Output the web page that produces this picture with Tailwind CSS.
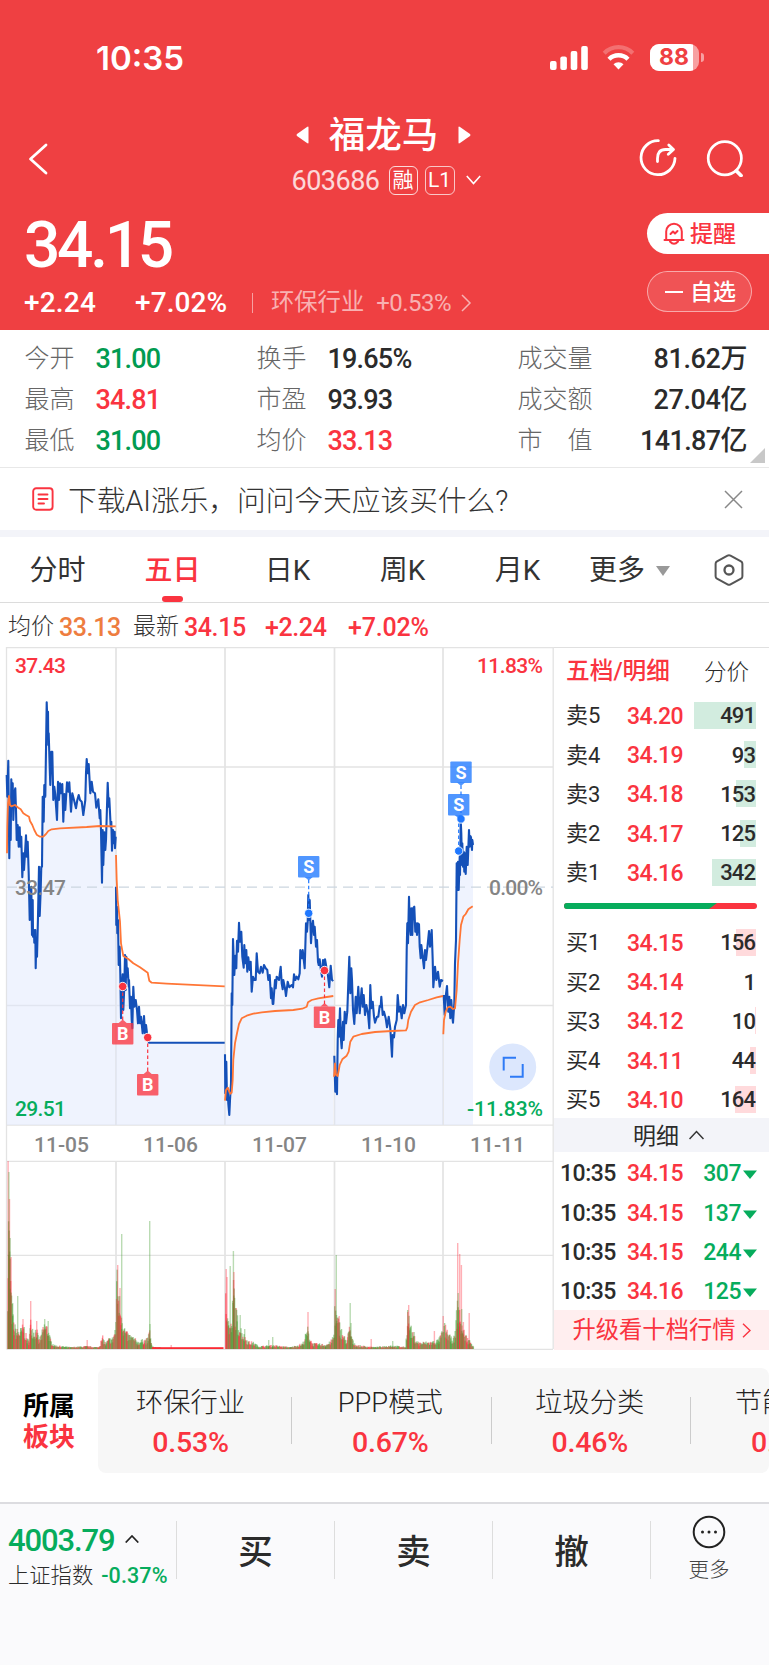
<!DOCTYPE html>
<html lang="zh-CN">
<head>
    <meta charset="UTF-8">
    <meta name="viewport" content="width=device-width, initial-scale=1.0">
    <title>福龙马 603686</title>
    <script src="https://cdn.jsdelivr.net/npm/@tailwindcss/browser@4"></script>
</head>
<body class="w-[769px] h-[1665px] overflow-hidden bg-white text-[#2b2b2b] leading-none whitespace-nowrap font-['Roboto','Noto_Sans_CJK_SC',sans-serif]">

    <!-- Header -->
    <header class="h-[330px] bg-[#ef4042] text-white flex flex-col">
        <div class="h-[115px] flex items-center justify-between pl-[96px] pr-[65px]">
            <span class="font-['Inter'] font-semibold text-[33px] pt-px">10:35</span>
            <div class="flex items-center">
                <svg class="w-[38px] h-[24px]" viewBox="0 0 38 24" fill="currentColor">
                    <rect x="0" y="15" width="6.6" height="9" rx="2"/>
                    <rect x="10.3" y="10.5" width="6.6" height="13.5" rx="2"/>
                    <rect x="20.7" y="5" width="6.6" height="19" rx="2"/>
                    <rect x="31.2" y="0" width="6.6" height="24" rx="2"/>
                </svg>
                <svg class="w-[33px] h-[25px] ml-[14px]" viewBox="0 0 33 25" fill="none" stroke="currentColor">
                    <path d="M2.2 8.2a20 20 0 0 1 28.6 0" stroke-width="4.2" opacity=".25"/>
                    <path d="M7 14.2a13.4 13.4 0 0 1 19 0" stroke-width="4.4"/>
                    <path d="M16.5 24.5l-5-5.2a7 7 0 0 1 10 0z" fill="currentColor" stroke="none"/>
                </svg>
                <div class="ml-[15px] w-[49px] h-[27px] rounded-[9px] overflow-hidden bg-white/50">
                    <div class="w-[43px] h-full bg-white text-[#ef4042] font-['Inter'] font-bold text-[23px] flex items-center justify-center pl-[5px]">88</div>
                </div>
                <div class="ml-[2px] w-[3px] h-[9px] rounded-r-full bg-white/50"></div>
            </div>
        </div>

        <div class="h-[85px] grid grid-cols-[200px_1fr_200px]">
            <div class="pl-[27px] pt-[28px]">
                <svg class="w-[22px] h-[32px]" viewBox="0 0 22 32" fill="none" stroke="currentColor" stroke-width="2.8" stroke-linecap="round" stroke-linejoin="round"><path d="M19 2L3.5 16 19 30"/></svg>
            </div>
            <div class="flex flex-col items-center">
                <div class="flex items-center h-[40px] gap-[20px] pr-[2px]">
                    <svg class="w-[13px] h-[18px]" viewBox="0 0 13 18" fill="currentColor"><path d="M12.5 1.5v15q0 1.5-1.5.5L1 10q-1-1 0-2L11 1q1.5-1 1.5.5z"/></svg>
                    <h1 class="text-[36.5px] font-medium pt-[3px]">福龙马</h1>
                    <svg class="w-[13px] h-[18px]" viewBox="0 0 13 18" fill="currentColor"><path d="M.5 1.5v15q0 1.5 1.5.5l10-7q1-1 0-2L2 1Q.5 0 .5 1.5z"/></svg>
                </div>
                <div class="flex items-center h-[52px] -mt-[1px] pl-[3px]">
                    <span class="text-[27px] tracking-[-0.5px] text-white/80 pt-[3px]">603686</span>
                    <span class="ml-[9px] size-[29px] rounded-[6px] border border-white/80 flex items-center justify-center text-[21px]">融</span>
                    <span class="ml-[7px] w-[30px] h-[29px] rounded-[6px] border border-white/70 flex items-center justify-center text-[21px]">L1</span>
                    <svg class="ml-[11px] w-[15px] h-[10px]" viewBox="0 0 15 10" fill="none" stroke="currentColor" stroke-width="1.6"><path d="M.8 1l6.700 7.500L14.200 1"/></svg>
                </div>
            </div>
            <div class="flex gap-[29px] pl-[70px] pt-[24px]">
                <svg class="w-[38px] h-[38px]" viewBox="0 0 38 38" fill="none" stroke="currentColor" stroke-width="2.8" stroke-linecap="round" stroke-linejoin="round">
                    <path d="M19.400 1.700A17 17 0 1 0 36 19.300"/>
                    <path d="M18.500 22.500v-3c0-6 2.500-9 8-9h7M29.800 6l4.700 4.500-5.200 4.700"/>
                </svg>
                <svg class="w-[38px] h-[38px]" viewBox="0 0 38 38" fill="none" stroke="currentColor" stroke-linecap="round">
                    <circle cx="18.800" cy="19.200" r="16.600" stroke-width="2.700"/>
                    <path d="M30.500 32l4.500 4.500" stroke-width="3.800"/>
                </svg>
            </div>
        </div>

        <div class="h-[130px] flex justify-between">
            <div class="pl-[24px] pt-[14px]">
                <div class="text-[64px] h-[64px] font-medium tracking-[-3.3px]">34.15</div>
                <div class="flex items-center h-[30px] mt-[10px]">
                    <span class="w-[111px] text-[28px] font-medium tracking-[0.2px]">+2.24</span>
                    <span class="w-[117px] text-[28px] font-medium tracking-[0.1px]">+7.02%</span>
                    <span class="w-px h-[20px] bg-white/50"></span>
                    <span class="ml-[18px] text-[23.3px] text-white/60">环保行业</span>
                    <span class="ml-[12px] text-[24px] text-white/60 tracking-[-0.5px]">+0.53%</span>
                    <svg class="ml-[10px] w-[11px] h-[18px]" viewBox="0 0 11 18" fill="none" stroke="currentColor" stroke-width="1.5" opacity=".6"><path d="M1 1l8 8-8 8"/></svg>
                </div>
            </div>
            <div class="w-[122px] pt-[13px]">
                <div class="h-[41px] rounded-l-full bg-white text-[#fa3440] flex items-center pl-[16px] text-[23px] font-medium">
                    <svg class="w-[22px] h-[23px] mr-[5px]" viewBox="0 0 22 23" fill="none" stroke="currentColor" stroke-width="2" stroke-linecap="round" stroke-linejoin="round">
                        <path d="M1.500 18h19M3.200 17.500V9.500a7.800 7.800 0 0 1 15.600 0v8M7 19.500q4 4.500 8 0M7.500 12l2.500-2.500 2 2 2.500-2.500"/>
                    </svg>
                    <span class="pt-[2px]">提醒</span>
                </div>
                <div class="mt-[17px] w-[105px] h-[41px] rounded-full border border-white/50 bg-white/10 flex items-center pl-[17px] text-[23px] font-medium">
                    <span class="w-[18px] h-[2px] mr-[7px] bg-white"></span><span class="pt-px">自选</span>
                </div>
            </div>
        </div>
    </header>

    <!-- Key figures -->
    <section class="relative h-[138px] pt-[9px] pr-[22px] border-b border-[#e8e8e8] grid grid-cols-[71px_161px_71px_190px_1fr] grid-rows-[41px_41px_41px] items-center pl-[24.500px] text-[27px] font-medium tracking-[-0.8px]">
        <span class="text-[25px] font-light text-[#666] tracking-normal -mt-[2px]">今开</span><span class="text-[#019b51]">31.00</span>
        <span class="text-[25px] font-light text-[#666] tracking-normal -mt-[2px]">换手</span><span>19.65%</span>
        <div class="flex justify-between items-center"><span class="text-[25px] font-light text-[#666] tracking-normal -mt-[2px]">成交量</span><span class="tracking-[-0.4px]">81.62万</span></div>
        <span class="text-[25px] font-light text-[#666] tracking-normal -mt-[2px]">最高</span><span class="text-[#fa3440]">34.81</span>
        <span class="text-[25px] font-light text-[#666] tracking-normal -mt-[2px]">市盈</span><span>93.93</span>
        <div class="flex justify-between items-center"><span class="text-[25px] font-light text-[#666] tracking-normal -mt-[2px]">成交额</span><span class="tracking-[-0.4px]">27.04亿</span></div>
        <span class="text-[25px] font-light text-[#666] tracking-normal -mt-[2px]">最低</span><span class="text-[#019b51]">31.00</span>
        <span class="text-[25px] font-light text-[#666] tracking-normal -mt-[2px]">均价</span><span class="text-[#fa3440]">33.13</span>
        <div class="flex justify-between items-center"><span class="text-[25px] font-light text-[#666] tracking-normal -mt-[2px]">市　值</span><span class="tracking-[-0.6px]">141.87亿</span></div>
        <svg class="absolute right-[4px] bottom-[4px] w-[15px] h-[15px]" viewBox="0 0 15 15" fill="#c8c8c8"><path d="M15 0v15H0z"/></svg>
    </section>

    <!-- Notice -->
    <section class="h-[62px] flex items-center pl-[32px] pr-[26px]">
        <svg class="w-[22px] h-[24px]" viewBox="0 0 22 24" fill="none" stroke="#fa3440" stroke-width="1.9" stroke-linecap="round">
            <rect x="1.200" y="1.200" width="19.400" height="21.600" rx="3"/><path d="M6.500 7.500h9M6.500 12h9M6.500 16.500h5.500"/>
        </svg>
        <span class="ml-[14px] pt-[4px] text-[28.7px] font-light text-[#333]">下载AI涨乐，问问今天应该买什么?</span>
        <svg class="ml-auto w-[19px] h-[19px]" viewBox="0 0 19 19" stroke="#888" stroke-width="1.5"><path d="M1 1l17 17M18 1L1 18"/></svg>
    </section>
    <div class="h-[7px] bg-[#f3f4f9]"></div>

    <!-- Period tabs -->
    <nav class="h-[66px] flex items-center border-b border-[#dcdcdc] text-[28px] text-[#333]">
        <span class="w-[115px] text-center pt-[3px]">分时</span>
        <span class="w-[115px] h-full relative flex items-center justify-center pt-[3px] text-[#fa3440] font-medium">五日<i class="absolute bottom-0 left-[47px] w-[21px] h-[6px] rounded-[3px] bg-[#fa3440]"></i></span>
        <span class="w-[115px] text-center pt-[3px]">日K</span>
        <span class="w-[115px] text-center pt-[3px]">周K</span>
        <span class="w-[115px] text-center pt-[3px]">月K</span>
        <span class="pl-[14px] pt-[3px] flex items-center">更多<svg class="ml-[11px] w-[14px] h-[10px]" viewBox="0 0 14 10" fill="#999"><path d="M0 0h14L7 10z"/></svg></span>
        <svg class="ml-[44px] w-[30px] h-[32px]" viewBox="0 0 30 32" fill="none" stroke="#555" stroke-width="2" stroke-linejoin="round">
            <path d="M13.500 1.600q1.500-.8 3 0l10.500 5.800q1.400.8 1.400 2.400v12.400q0 1.600-1.400 2.400l-10.500 5.800q-1.500.8-3 0L3 24.600q-1.400-.8-1.400-2.400V9.800Q1.600 8.200 3 7.400z"/><circle cx="15" cy="16" r="4.500" stroke-width="2.300"/>
        </svg>
    </nav>

    <div class="h-[44px] flex items-center pt-[4px] pl-[8px] text-[25px] font-medium tracking-[-0.4px] text-[#fa3440]">
        <span class="w-[51px] text-[23px] font-light text-[#333] tracking-normal -mt-[2px]">均价</span>
        <span class="w-[74px] text-[#ee7d3f]">33.13</span>
        <span class="w-[51px] text-[23px] font-light text-[#333] tracking-normal -mt-[2px]">最新</span>
        <span class="w-[81px]">34.15</span>
        <span class="w-[83px]">+2.24</span>
        <span class="tracking-[-0.2px]">+7.02%</span>
    </div>

    <!-- Chart and order book -->
    <main class="h-[703px] flex">
        <svg class="w-[554px] h-[703px] shrink-0" viewBox="0 647 554 703" font-size="21" font-weight="500">
            <g stroke="#e3e3e3" stroke-width="1.300" fill="none">
                <path d="M6.500 647.700H554M6.500 767H553M6.500 1005.500H553M6.500 1125.200H553M6.500 1161.300H553M6.500 1255.300H553M6.500 1349.300H553M6.500 647V1349M553.200 647V1349"/>
                <path stroke-width="1.700" d="M116 647V1125M225 647V1125M334.500 647V1125M443 647V1125M116 1161V1349M225 1161V1349M334.500 1161V1349M443 1161V1349"/>
            </g>
            <g id="area" fill="#dfe8fd" fill-opacity=".5"></g>
            <path d="M7 887.200H553" stroke="#cbd6df" stroke-width="1.200" stroke-dasharray="10 6"/>
            <g id="price" fill="none" stroke="#1450b8" stroke-width="2.100" stroke-linejoin="round"></g>
            <g id="average" fill="none" stroke="#ff7636" stroke-width="1.800" stroke-linejoin="round"></g>
            <g id="volume"></g>

            <text x="15" y="672.500" textLength="51" fill="#fa3440">37.43</text>
            <text x="15" y="894.500" textLength="51" fill="#858585">33.47</text>
            <text x="15" y="1116" textLength="51" fill="#06ac5c">29.51</text>
            <text x="477" y="672.500" textLength="66" fill="#fa3440">11.83%</text>
            <text x="489" y="894.500" textLength="54" fill="#858585">0.00%</text>
            <text x="467" y="1116" textLength="76" fill="#06ac5c">-11.83%</text>
            <g fill="#858585">
                <text x="34" y="1151.500" textLength="55">11-05</text>
                <text x="143" y="1151.500" textLength="55">11-06</text>
                <text x="252" y="1151.500" textLength="55">11-07</text>
                <text x="361" y="1151.500" textLength="55">11-10</text>
                <text x="470" y="1151.500" textLength="55">11-11</text>
            </g>
            <g id="marks" font-size="18" font-weight="700" text-anchor="middle"></g>
            <circle cx="512.700" cy="1067" r="23.500" fill="#dce7fd"/>
            <path d="M503.700 1070.500V1057.700H516M522.700 1064V1076.700H510" fill="none" stroke="#2f7bf6" stroke-width="2"/>
        </svg>

        <aside class="w-[215px] border-t border-[#e0e0e0] flex flex-col">
            <div class="h-[48px] flex items-center pl-[12px] pr-[20px] pt-[2px] justify-between">
                <span class="text-[23.7px] font-medium text-[#fa3440]">五档/明细</span>
                <span class="text-[22.5px] font-light">分价</span>
            </div>
            <div id="sell" class="pt-[1px]"></div>
            <div class="h-[28px] pl-[10px] pt-[11px]">
                <svg class="w-[193px] h-[6px]" viewBox="0 0 193 6"><rect width="193" height="6" rx="3" fill="#fa3440"/><path d="M3 0H153L145 6H3A3 3 0 0 1 3 0" fill="#06ac5c"/></svg>
            </div>
            <div id="buy" class="pt-[3px]"></div>
            <div class="h-[34px] mt-[-1px] shrink-0 bg-[#f3f4f9] flex items-center pl-[79px] text-[23px] gap-[10px]"><span class="pt-[2px]">明细</span>
                <svg class="w-[15px] h-[10px]" viewBox="0 0 15 10" fill="none" stroke="#333" stroke-width="1.5"><path d="M.5 9l7-7.500 7 7.500"/></svg>
            </div>
            <div id="trades" class="pt-[1px]"></div>
            <div class="mt-auto h-[41px] bg-[#ffeeef] text-[#fa3440] flex items-center justify-center text-[23.3px] gap-[6px]"><span class="pt-[2px]">升级看十档行情</span>
                <svg class="w-[9px] h-[15px]" viewBox="0 0 9 15" fill="none" stroke="currentColor" stroke-width="1.4"><path d="M1 .7l7 6.800-7 6.800"/></svg>
            </div>
        </aside>
    </main>

    <!-- Sectors -->
    <section class="h-[152px] pt-[18px] flex">
        <div class="w-[98px] shrink-0 h-[105px] flex flex-col justify-center pl-[23px] text-[26px] font-bold leading-[31px] text-black pt-[2px]">
            <span>所属</span><span class="text-[#fa3440]">板块</span>
        </div>
        <div class="w-[671px] h-[105px] rounded-[8px] bg-[#f7f7f7] overflow-hidden">
            <div class="-ml-[6px] h-full flex items-center text-center text-[28.5px] font-medium tracking-[-0.2px] text-[#fa3440]">
                <div class="w-[200px] shrink-0 pt-[7px] pr-[3px]"><p class="text-[27.3px] font-light text-[#222] tracking-normal mb-[12px]">环保行业</p><p>0.53%</p></div>
                <i class="w-px -ml-px h-[47px] shrink-0 bg-[#ccc]"></i>
                <div class="w-[199.500px] shrink-0 pt-[7px] pr-[3px]"><p class="text-[27.3px] font-light text-[#222] tracking-normal mb-[12px]">PPP模式</p><p>0.67%</p></div>
                <i class="w-px -ml-px h-[47px] shrink-0 bg-[#ccc]"></i>
                <div class="w-[199.500px] shrink-0 pt-[7px] pr-[3px]"><p class="text-[27.3px] font-light text-[#222] tracking-normal mb-[12px]">垃圾分类</p><p>0.46%</p></div>
                <i class="w-px -ml-px h-[47px] shrink-0 bg-[#ccc]"></i>
                <div class="w-[199.500px] shrink-0 pt-[7px] pr-[3px]"><p class="text-[27.3px] font-light text-[#222] tracking-normal mb-[12px]">节能环保</p><p>0.53%</p></div>
            </div>
        </div>
    </section>

    <!-- Bottom bar -->
    <footer class="h-[163px] bg-[#fafafc] border-t-2 border-[#dcdce0] flex">
        <div class="w-[176px] pl-[8px] pt-[21px]">
            <div class="flex items-center text-[31px] text-[#06ac5c] font-medium tracking-[-1.1px]">4003.79
                <svg class="ml-[10px] w-[14px] h-[8px] -mt-[4px]" viewBox="0 0 14 8" fill="none" stroke="#222" stroke-width="1.7"><path d="M.7 7.500L7 1l6.300 6.500"/></svg>
            </div>
            <div class="flex items-center gap-[8px] mt-[9px]">
                <span class="text-[21.3px] font-light">上证指数</span><span class="text-[21.5px] text-[#06ac5c] font-medium tracking-[0.1px]">-0.37%</span>
            </div>
        </div>
        <div class="h-[58px] mt-[17px] w-[158px] border-l border-[#ddd] flex items-center justify-center pt-[5px] text-[34.5px] font-medium">买</div>
        <div class="h-[58px] mt-[17px] w-[158px] border-l border-[#ddd] flex items-center justify-center pt-[5px] text-[34.5px] font-medium">卖</div>
        <div class="h-[58px] mt-[17px] w-[158px] border-l border-[#ddd] flex items-center justify-center pt-[5px] text-[34.5px] font-medium">撤</div>
        <div class="h-[58px] mt-[17px] w-[119px] border-l border-[#ddd]">
            <div class="flex flex-col items-center -mt-[6px] pr-[2px]">
                <svg class="w-[34px] h-[34px]" viewBox="0 0 34 34" fill="#222"><circle cx="17" cy="17" r="15.300" fill="none" stroke="#222" stroke-width="2"/><circle cx="10.500" cy="17" r="1.500"/><circle cx="17" cy="17" r="1.500"/><circle cx="23.500" cy="17" r="1.500"/></svg>
                <span class="mt-[11px] text-[20.5px] font-light text-[#444]">更多</span>
            </div>
        </div>
    </footer>

    <script>
    // order book rows: label, price, quantity, bar width
    const sell = [['卖5', '34.20', 491, 62], ['卖4', '34.19', 93, 12], ['卖3', '34.18', 153, 20], ['卖2', '34.17', 125, 16], ['卖1', '34.16', 342, 44]];
    const buy = [['买1', '34.15', 156, 20], ['买2', '34.14', 1, 0], ['买3', '34.12', 10, 1], ['买4', '34.11', 44, 6], ['买5', '34.10', 164, 21]];
    const trades = [['34.15', 307], ['34.15', 137], ['34.15', 244], ['34.16', 125]];

    const bookRow = (r, bar) => `
        <div class="h-[39.3px] flex items-center pl-[12px] pr-[13px] text-[23px]">
            <span class="w-[61px] text-[22px] pt-[2px]">${r[0]}</span>
            <span class="text-[#fa3440] font-medium tracking-[-0.5px] pt-[2px]">${r[1]}</span>
            <span class="ml-auto relative h-[27px] w-[62px] flex items-center justify-end font-medium text-[22px] tracking-[-0.9px]">
                <i class="absolute right-0 inset-y-0 ${bar}" style="width:${r[3]}px"></i><b class="relative font-medium pt-[2px] pr-px">${r[2]}</b>
            </span>
        </div>`;
    document.getElementById('sell').innerHTML = sell.map(r => bookRow(r, 'bg-[#d2ecdf]')).join('');
    document.getElementById('buy').innerHTML = buy.map(r => bookRow(r, 'bg-[#ffdadc]')).join('');
    document.getElementById('trades').innerHTML = trades.map(r => `
        <div class="h-[39.3px] flex items-center pt-[2px] pl-[6px] pr-[12px] text-[23px] font-medium tracking-[-0.5px]">
            <span class="w-[67px]">10:35</span><span class="text-[#fa3440]">${r[0]}</span>
            <span class="ml-auto text-[#06ac5c] flex items-center gap-[2px]">${r[1]}<svg class="w-[14px] h-[9px] mt-[2px]" viewBox="0 0 14 9" fill="currentColor"><path d="M0 .5h14L7 9z"/></svg></span>
        </div>`).join('');

    // intraday prices, three units per pixel; each day has its own origin
    const days = [
        { o: [0, 640], b: 1455,
          p: '20,405 22,470 25,362 28,655 30,500 32,600 34,418 36,500 38,430 40,540 43,460 46,445 48,510 50,600 53,555 56,620 59,562 61,620 64,590 67,712 70,640 72,690 75,640 78,586 80,650 83,605 86,700 89,840 92,770 94,740 96,885 98,780 99,890 102,870 103,908 106,870 107,985 109,900 111,950 114,830 117,680 119,828 122,750 124,680 126,680 128,470 131,545 133,435 136,470 138,330 140,187 142,240 144,215 145,315 146,280 149,380 151,435 154,335 157,335 160,480 163,440 166,465 169,510 171,540 174,425 177,480 180,430 183,460 187,432 190,545 193,462 196,510 201,427 205,455 208,427 213,515 217,460 222,480 228,505 232,480 236,465 240,480 245,485 250,525 256,480 258,400 260,357 263,400 266,372 271,460 275,425 279,455 285,460 289,503 295,478 299,535 301,510 303,570 306,728 308,570 310,675 313,577 316,630 318,600 320,530 323,428 326,500 328,475 332,560 334,545 336,632 339,570 341,610 344,575 345,625 347,590',
          a: '21,640 22,560 24,490 27,468 30,495 34,499 45,495 55,503 62,508 70,520 78,525 87,530 90,543 97,555 103,570 110,584 120,590 130,590 138,582 145,573 155,568 180,565 260,561 300,558 347,559' },
        { o: [0, 640], b: 1455,
          p: '348,740 349,855 351,800 352,880 354,840 356,975 359,920 361,1000 363,1135 365,1050 368,1003 370,1110 373,1040 375,945 377,1050 379,950 381,1010 383,985 386,1040 387,1020 390,1105 393,1070 395,1140 397,1165 400,1040 403,1100 407,1080 411,1110 414,1150 417,1100 420,1150 423,1130 428,1180 432,1128 435,1180 438,1155 441,1180 443,1193 447,1208 674,1208',
          a: '348,645 350,720 353,780 360,845 363,910 370,948 385,957 400,970 420,982 443,998 448,1022 455,1028 500,1031 674,1039' },
        { o: [215, 750], b: 1125,
          p: '30,913 31,1030 34,935 36,1050 38,1015 40,1060 43,1095 45,1050 48,1000 50,730 52,765 54,567 58,675 61,617 64,655 66,572 69,605 72,518 75,575 79,545 82,620 86,653 88,585 91,640 94,600 97,665 100,622 104,660 107,635 110,725 114,680 118,690 122,690 125,610 129,665 134,670 138,650 143,668 147,645 152,655 157,660 160,690 164,675 168,745 170,715 173,762 175,762 180,690 182,715 185,680 192,690 197,650 200,700 203,718 205,690 210,715 213,738 218,695 223,712 230,705 234,712 237,673 241,690 245,680 250,688 254,670 256,600 261,625 263,600 269,655 273,520 276,545 278,515 280,435 282,510 284,450 288,580 291,530 294,512 297,555 299,530 303,590 306,570 309,635 311,645 314,628 317,655 321,680 324,630 327,655 330,628 334,650 338,670 343,712 347,647 351,690 355,693',
          a: '30,1052 33,1020 38,1013 43,1025 46,1031 50,1028 53,990 55,930 60,880 66,850 72,822 80,805 95,797 115,791 140,787 180,783 235,780 262,776 275,770 279,757 290,750 310,745 335,741 355,738' },
        { o: [215, 750], b: 1125,
          p: '358,917 361,1025 364,970 366,1033 368,870 370,810 372,860 375,775 378,870 380,895 384,815 386,870 389,785 393,820 397,785 400,700 403,620 406,730 409,655 411,690 414,780 418,822 422,740 425,790 430,710 434,790 437,750 440,715 443,770 446,735 450,795 454,765 459,790 463,835 466,705 469,775 473,755 477,800 480,818 486,800 490,800 494,768 497,770 499,740 503,795 507,785 512,805 516,832 521,800 526,835 531,920 533,855 537,862 540,830 545,810 548,735 552,785 556,770 560,805 564,765 568,790 573,765 575,600 577,520 579,580 582,440 584,520 587,555 589,475 592,555 594,475 598,470 601,545 603,520 606,555 608,520 612,523 614,590 617,625 619,585 622,610 627,655 630,600 633,630 637,595 642,543 645,590 650,540 653,630 655,712 660,650 664,690 669,665 674,710 678,690 684,693',
          a: '357,980 360,940 363,975 368,978 374,945 382,928 395,917 401,905 406,875 415,860 440,852 480,846 530,843 573,841 577,832 580,810 588,785 600,765 615,757 640,750 665,742 684,738' },
        { o: [215, 750], b: 1125,
          p: '686,735 689,795 692,740 696,708 700,785 703,740 706,805 709,750 712,800 714,818 718,760 720,640 723,570 725,340 727,420 729,335 731,420 734,320 735,375 737,210 739,250 741,345 742,280 744,350 746,305 748,365 750,310 752,372 755,290 758,345 762,240 764,290 766,258 768,262 771,300 772,270 774,285',
          a: '685,853 687,810 692,785 698,772 706,770 714,777 720,775 725,720 729,640 734,570 738,525 745,500 752,492 760,478 773,469' }
    ];
    const line = (s, o) => s.split(' ').map(c => c.split(',').map((v, i) => (o[i] + v / 3).toFixed(1)).join(',')).join(' ');
    let area = '', price = '', average = '';
    days.forEach(d => {
        const pts = line(d.p, d.o), list = pts.split(' ');
        const base = d.o[1] + d.b / 3;
        area += `<polygon points="${list[0].split(',')[0]},${base} ${pts} ${list[list.length - 1].split(',')[0]},${base}"/>`;
        price += `<polyline points="${pts}"/>`;
        average += `<polyline points="${line(d.a, d.o)}"/>`;
    });
    document.getElementById('area').innerHTML = area;
    document.getElementById('price').innerHTML = price;
    document.getElementById('average').innerHTML = average;

    // volume envelopes [x, height] per day, then the single tall bars
    const envelopes = [
        [[7, 90], [8, 150], [9.5, 92], [11, 50], [13, 28], [16, 20], [20, 21], [23, 26], [26, 12], [28, 9], [30, 30], [33, 21], [36, 23], [38, 9], [41, 17], [44, 28], [47, 24], [50, 9], [54, 4], [70, 2], [85, 3], [98, 2], [102, 13], [105, 6], [108, 11], [112, 12], [115, 25]],
        [[116, 84], [118, 60], [121, 42], [123, 26], [126, 17], [131, 14], [137, 8], [143, 10], [147, 11], [149, 21], [150.5, 6], [153, 2], [160, 1.5]],
        [[225, 78], [228, 28], [231, 26], [233, 74], [235, 43], [238, 28], [243, 16], [248, 8], [253, 7], [258, 3], [272, 4], [290, 2], [302, 6], [307, 22], [309, 13], [312, 6], [325, 5], [330, 8], [334, 18]],
        [[334, 55], [336, 35], [339, 28], [342, 16], [346, 9], [349, 24], [352, 9], [356, 4], [375, 2], [390, 4], [405, 2], [407, 42], [410, 24], [413, 14], [418, 7], [432, 8], [438, 10], [442, 20]],
        [[443, 28], [446, 21], [450, 12], [454, 13], [457, 54], [459, 38], [462, 23], [466, 13], [469, 9], [473, 4]]
    ];
    const spikes = [[7.4, 188, 0], [8.2, 177, 1], [8.8, 150, 0], [9.5, 111, 1], [10.4, 92, 0], [12, 46, 1], [17, 53, 1], [22.3, 30, 0], [30, 48, 0], [36, 28, 0], [44, 30, 1], [47.5, 28, 1], [86.5, 9, 0], [115, 27, 1], [115.9, 50, 0], [117, 84, 0], [119.3, 61, 0], [121, 115, 1], [149, 128, 1], [149.3, 25, 1], [170.5, 4, 0], [225.5, 80, 0], [226.3, 72, 0], [229.5, 83, 1], [232.7, 98, 1], [233.2, 77, 0], [239.5, 34, 1], [244, 20, 1], [268, 9, 1], [272, 12, 1], [307.3, 37, 0], [334.5, 60, 0], [335.6, 94, 1], [338.5, 33, 0], [349.5, 46, 1], [350.3, 26, 1], [370.5, 10, 0], [392, 8, 1], [407, 37, 0], [408, 44, 0], [413.5, 17, 1], [433.7, 18, 0], [442.5, 33, 0], [457, 106, 0], [457.5, 56, 1], [459, 95, 0], [460.7, 84, 0], [461, 40, 1], [462.7, 27, 0], [468.5, 36, 0]];
    let seed = 7;
    const rnd = () => (seed = (seed * 16807) % 2147483647) / 2147483647;
    const bar = (x, h, green, o) => `<rect x="${x.toFixed(2)}" y="${(1349 - h).toFixed(1)}" width="1.4" height="${h.toFixed(1)}" fill="${green ? '#3f9a2c' : '#ff2336'}" fill-opacity="${o}"/>`;
    let volume = '';
    envelopes.forEach(e => {
        for (let i = 0; i < e.length - 1; i++) {
            const [x0, h0] = e[i], [x1, h1] = e[i + 1];
            for (let x = x0; x < x1; x += 0.46) {
                const h = h0 + (h1 - h0) * (x - x0) / (x1 - x0);
                volume += bar(x, Math.max(1.4, h * (0.42 + 0.63 * rnd())), rnd() > 0.42, 0.46);
            }
        }
    });
    spikes.forEach(s => { volume += bar(s[0], s[1], s[2], 0.36); });
    volume += '<rect x="152" y="1347.200" width="71.500" height="1.800" fill="#fb2a33"/>';
    document.getElementById('volume').innerHTML = volume;

    // trade marks: letter, dot position, top of the box
    const marks = [['B', 122.7, 986.5, 1023], ['B', 147.7, 1037.5, 1074], ['B', 324.5, 970.5, 1006.5], ['S', 308.7, 913.3, 856], ['S', 461, 819, 761.5], ['S', 458.7, 851, 794]];
    document.getElementById('marks').innerHTML = marks.map(([t, x, y, top]) => {
        const isBuy = t === 'B', c = isBuy ? '#fa3440' : '#1f78ff';
        const edge = isBuy ? top - 2 : top + 23;
        const tip = isBuy ? `M${x - 4} ${top}l4-3.5 4 3.5z` : `M${x - 4} ${top + 21}l4 3.5 4-3.5z`;
        return `<path d="M${x} ${y}V${edge}" stroke="${c}" stroke-width="1.2" stroke-dasharray="3.5 2.5"/>
            <g fill="${c}" fill-opacity=".78"><rect x="${x - 10.7}" y="${top}" width="21.4" height="21.4" rx="1"/><path d="${tip}"/></g>
            <text x="${x}" y="${top + 17}" fill="#fff">${t}</text>
            <circle cx="${x}" cy="${y}" r="4.2" fill="${c}" stroke="#fff" stroke-width=".9"/>`;
    }).join('');
    </script>
</body>
</html>
